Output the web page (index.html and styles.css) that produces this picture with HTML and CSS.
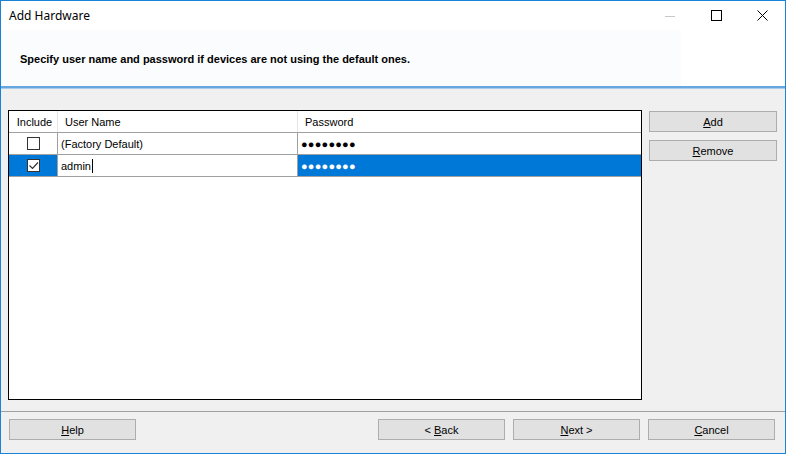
FILE: index.html
```html
<!DOCTYPE html>
<html lang="en">
<head>
  <meta charset="UTF-8" />
  <title>Add Hardware</title>
  <link rel="stylesheet" href="styles.css">
</head>
<body>
  <div class="window">
    <div class="titlebar">
      <span class="title">Add Hardware</span>
      <div class="caption-buttons">
        <span class="cap cap-min"><svg width="10" height="10" viewBox="0 0 10 10"><path d="M0 5.5h10" stroke="#c8c8c8" stroke-width="1"/></svg></span>
        <span class="cap"><svg width="11" height="11" viewBox="0 0 11 11"><rect x="0.5" y="0.5" width="10" height="10" fill="none" stroke="#000" stroke-width="1"/></svg></span>
        <span class="cap"><svg width="11" height="11" viewBox="0 0 11 11"><path d="M0.5 0.5l10 10M10.5 0.5l-10 10" stroke="#000" stroke-width="1"/></svg></span>
      </div>
    </div>

    <div class="header">
      <div class="banner">Specify user name and password if devices are not using the default ones.</div>
    </div>
    <div class="header-line"></div>

    <div class="content">
      <div class="grid">
        <div class="row head">
          <div class="cell c-inc">Include</div>
          <div class="cell c-user">User Name</div>
          <div class="cell c-pass">Password</div>
        </div>
        <div class="row">
          <div class="cell c-inc"><span class="check"></span></div>
          <div class="cell c-user">(Factory Default)</div>
          <div class="cell c-pass"><span class="dots">●●●●●●●●</span></div>
        </div>
        <div class="row selected">
          <div class="cell c-inc"><span class="check checked"><svg width="11" height="11" viewBox="0 0 11 11"><path d="M1.5 5.5l3 3 5.5-6" fill="none" stroke="#333" stroke-width="1.2"/></svg></span></div>
          <div class="cell c-user editing">admin<span class="caret"></span></div>
          <div class="cell c-pass"><span class="dots">●●●●●●●●</span></div>
        </div>
      </div>

      <div class="side">
        <button class="btn side-btn"><u>A</u>dd</button>
        <button class="btn side-btn"><u>R</u>emove</button>
      </div>
    </div>

    <div class="footer">
      <button class="btn"><u>H</u>elp</button>
      <div class="nav-buttons">
        <button class="btn">&lt; <u>B</u>ack</button>
        <button class="btn"><u>N</u>ext &gt;</button>
        <button class="btn"><u>C</u>ancel</button>
      </div>
    </div>
  </div>
</body>
</html>
```

FILE: styles.css
```css
body {
  margin: 0;
  font-family: 'Liberation Sans', Arial, sans-serif;
  font-size: 11px;
  color: #000;
  background: #fff;
}
.window {
  width: 786px;
  height: 454px;
  box-sizing: border-box;
  border: 1px solid #1883d7;
  display: flex;
  flex-direction: column;
  background: #f0f0f0;
}
.titlebar {
  height: 29px;
  background: #fff;
  display: flex;
  align-items: center;
  justify-content: space-between;
}
.title {
  font-family: 'Noto Sans', 'Liberation Sans', sans-serif;
  font-size: 12px;
  padding-left: 8px;
  margin-top: -1px;
}
.caption-buttons {
  display: flex;
  height: 29px;
}
.cap {
  width: 46px;
  display: flex;
  align-items: center;
  justify-content: center;
  margin-top: -1px;
}
.cap-min {
  margin-top: 1px;
}
.header {
  height: 56px;
  background: #fff;
  display: flex;
}
.banner {
  width: 680px;
  background: #fbfcfe;
  font-weight: bold;
  display: flex;
  align-items: center;
  padding-left: 19px;
  box-sizing: border-box;
  padding-top: 2px;
}
.header-line {
  height: 2px;
  background: #67a7dd;
  border-bottom: 1px solid #a6cbec;
}
.content {
  flex: 1;
  display: flex;
  padding: 21px 7px 11px 7px;
  gap: 7px;
}
.grid {
  width: 634px;
  border: 1px solid #000;
  background: #fff;
  box-sizing: border-box;
}
.row {
  display: flex;
  height: 22px;
  border-bottom: 1px solid #a0a0a0;
  box-sizing: border-box;
}
.cell {
  display: flex;
  align-items: center;
  box-sizing: border-box;
  border-right: 1px solid #a0a0a0;
  padding-left: 3px;
}
.head .cell {
  border-right-color: #e5e5e5;
}
.c-inc {
  width: 49px;
  justify-content: center;
  padding-left: 0;
}
.head .c-inc {
  padding-left: 3px;
}
.head .c-user,
.head .c-pass {
  padding-left: 7px;
}
.c-user {
  width: 240px;
}
.c-pass {
  flex: 1;
  border-right: none;
}
.check {
  width: 13px;
  height: 13px;
  border: 1px solid #333;
  box-sizing: border-box;
  background: #fff;
  display: flex;
  align-items: center;
  justify-content: center;
}
.dots {
  font-size: 11px;
  letter-spacing: 0.2px;
  padding-top: 1px;
}
.selected .c-inc,
.selected .c-pass {
  background: #0078d7;
  color: #fff;
}
.caret {
  display: inline-block;
  width: 1px;
  height: 14px;
  background: #000;
  margin-left: 1px;
}
.side {
  display: flex;
  flex-direction: column;
  gap: 8px;
  padding-top: 1px;
}
.btn {
  font-family: 'Liberation Sans', Arial, sans-serif;
  font-size: 11px;
  width: 127px;
  height: 21px;
  background: #e1e1e1;
  border: 1px solid #adadad;
  color: #000;
  padding: 0;
  margin: 0;
}
.side-btn {
  width: 128px;
}
.footer {
  height: 42px;
  border-top: 1px solid #a0a0a0;
  display: flex;
  justify-content: space-between;
  padding: 7px 10px 0 8px;
  box-sizing: border-box;
  align-items: flex-start;
}
.nav-buttons {
  display: flex;
  gap: 8px;
}
```
